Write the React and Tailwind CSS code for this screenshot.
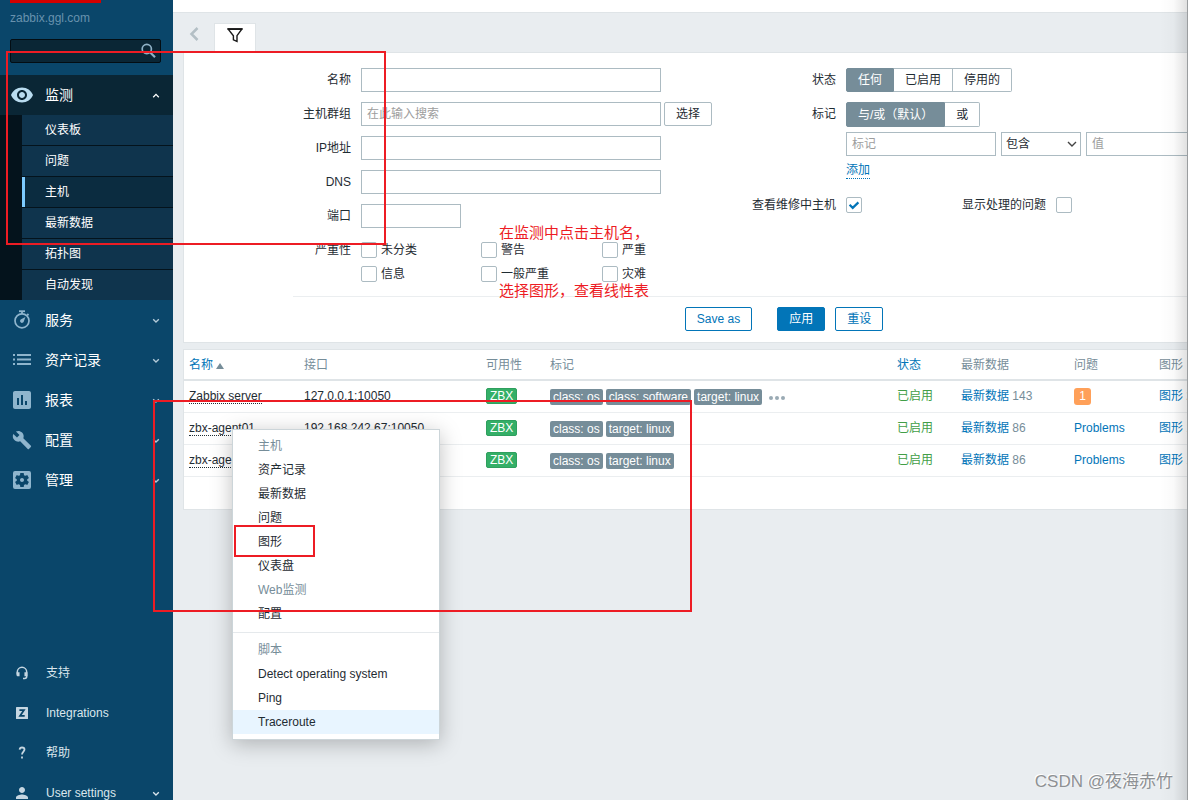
import React from 'react';
import { MdVisibility, MdAssessment, MdSettingsApplications, MdPerson } from 'react-icons/md';

const inputClass =
  'h-6 border border-[#acbbc2] bg-white px-[5px] text-xs text-[#1f2c33] outline-none placeholder:text-[#9d9d9d]';

function Chevron({ up }) {
  return (
    <svg className="h-2 w-2 shrink-0" viewBox="0 0 8 8" fill="none" stroke="currentColor" strokeWidth="1.3">
      <path d={up ? 'M1.2 6.2 4 3.4l2.8 2.8' : 'M1.2 3.2 4 6l2.8-2.8'} />
    </svg>
  );
}

function StopwatchIcon() {
  return (
    <svg className="h-5 w-5" viewBox="0 0 20 20" fill="none" stroke="currentColor">
      <circle cx="10" cy="10.800" r="7" strokeWidth="1.7" />
      <path d="M7 1.200h6" strokeWidth="1.8" />
      <path d="M10 1.500v2.500M15.200 4l1.300 1.300" strokeWidth="1.8" />
      <path d="M13.400 7 11.700 11.800a1.900 1.900 0 1 1-2.600-2.500z" fill="currentColor" stroke="none" />
    </svg>
  );
}

function ListIcon() {
  return (
    <svg className="h-5 w-5" viewBox="0 0 20 20" fill="currentColor">
      <path d="M1 4h2v2H1zM5 4h14v2H5zM1 8.500h2v2H1zM5 8.500h14v2H5zM1 13h2v2H1zM5 13h14v2H5z" />
    </svg>
  );
}

function WrenchIcon() {
  return (
    <svg className="h-5 w-5" viewBox="0 0 24 24" fill="currentColor">
      <path d="M22.7 19l-9.1-9.1c.9-2.3.4-5-1.5-6.9-2-2-5-2.4-7.4-1.3L9 6 6 9 1.6 4.7C.4 7.1.9 10.1 2.9 12.1c1.900 1.900 4.600 2.400 6.900 1.500l9.100 9.100c.4.4 1 .4 1.400 0l2.300-2.300c.5-.4.5-1.100.1-1.400z" />
    </svg>
  );
}

function HeadsetIcon() {
  return (
    <svg className="h-[14px] w-[14px]" viewBox="0 0 14 14" fill="none" stroke="currentColor">
      <path d="M2.300 8.500V6a4.700 4.700 0 0 1 9.400 0V10.500c0 1.200-.8 1.900-2 1.900H8" strokeWidth="1.500" />
      <path d="M1.550 6.300h3v4H3c-.9 0-1.450-.5-1.450-1.300zM12.450 6.300h-3v4h3z" fill="currentColor" stroke="none" />
    </svg>
  );
}

function ZIcon() {
  return (
    <svg className="h-3 w-3" viewBox="0 0 12 12">
      <rect width="12" height="12" rx="0.6" fill="currentColor" />
      <path d="M3.400 3.100h4.600L4 8.900h4.700" fill="none" stroke="#0a466a" strokeWidth="1.700" />
    </svg>
  );
}

function QuestionIcon() {
  return (
    <svg className="h-4 w-4" viewBox="0 0 16 16" fill="none" stroke="currentColor" strokeWidth="1.8">
      <path d="M5.600 4.600C5.800 3 6.700 2.500 8 2.500c1.500 0 2.500.8 2.500 2.100C10.500 6.500 8 6.700 8 9.600" />
      <path d="M8 11.600v2" />
    </svg>
  );
}

const subItems = ['仪表板', '问题', '主机', '最新数据', '拓扑图', '自动发现'];

const mainItems = [
  { label: '服务', icon: <StopwatchIcon /> },
  { label: '资产记录', icon: <ListIcon /> },
  { label: '报表', icon: <MdAssessment size={24} /> },
  { label: '配置', icon: <WrenchIcon /> },
  { label: '管理', icon: <MdSettingsApplications size={24} /> },
];

const footItems = [
  { label: '支持', icon: <HeadsetIcon /> },
  { label: 'Integrations', icon: <ZIcon /> },
  { label: '帮助', icon: <QuestionIcon /> },
  { label: 'User settings', icon: <MdPerson size={18} />, more: true },
];

function Sidebar() {
  return (
    <aside className="flex w-[173px] shrink-0 flex-col overflow-hidden bg-[#0a466a] text-white">
      <div className="px-[10px]">
        <div className="h-[3px] w-[91px] bg-[#d40000]" />
        <div className="mt-[5px] h-5 text-xs leading-5 text-[#6892ae]">zabbix.ggl.com</div>
        <form className="mt-[11px] mr-[2px] flex h-6 items-center rounded-xs border border-[#030d13] bg-[#0a2635]">
          <input aria-label="搜索" className="h-full min-w-0 flex-1 bg-transparent px-1 text-xs outline-none" />
          <button type="button" aria-label="搜索" className="mr-1 text-[#8fb1c6]">
            <svg className="h-4 w-4" viewBox="0 0 16 16" fill="none" stroke="currentColor">
              <circle cx="6.800" cy="6" r="4.600" strokeWidth="1.700" />
              <path d="m10.300 9.500 4.700 4.700" strokeWidth="2.200" />
            </svg>
          </button>
        </form>
      </div>

      <nav className="mt-3">
        <button type="button" className="flex h-10 w-full items-center bg-[#0a2635] pr-[13px] text-left">
          <span className="flex w-11 justify-center text-[#b9dcf0]">
            <MdVisibility size={24} />
          </span>
          <span className="flex-1 pl-px text-sm">监测</span>
          <Chevron up />
        </button>
        <ul className="bg-[#04131c] pl-[22px]">
          {subItems.map((label, i) => (
            <li key={label} className={i < 5 ? 'border-b border-[#04131c]' : ''}>
              <a
                href="#"
                className={
                  'flex h-[30px] items-center text-xs ' +
                  (label === '主机'
                    ? 'border-l-3 border-[#7dcbff] bg-[#0b2c40] pl-5'
                    : 'bg-[#0f344d] pl-[23px]')
                }
              >
                {label}
              </a>
            </li>
          ))}
        </ul>
        {mainItems.map((item) => (
          <button key={item.label} type="button" className="flex h-10 w-full items-center pr-[13px] text-left">
            <span className="flex w-11 justify-center text-[#8fb5cd]">{item.icon}</span>
            <span className="flex-1 pl-px text-sm">{item.label}</span>
            <span className="flex text-[#b5cbd9]">
              <Chevron />
            </span>
          </button>
        ))}
      </nav>

      <nav className="mt-[153px] text-[#dbe6ed]">
        {footItems.map((item) => (
          <a key={item.label} href="#" className="flex h-10 items-center pr-[13px]">
            <span className="flex w-11 justify-center text-[#c5d6e1]">{item.icon}</span>
            <span className="flex-1 pl-[2px] text-xs">{item.label}</span>
            {item.more && <Chevron />}
          </a>
        ))}
      </nav>
    </aside>
  );
}

function TextRow({ id, label, placeholder, narrow, children }) {
  return (
    <div className="flex h-6 items-center">
      <label htmlFor={id} className="mr-[10px] w-[58px] text-right">
        {label}
      </label>
      <input
        id={id}
        placeholder={placeholder}
        className={inputClass + (narrow ? ' w-[100px]' : ' w-[300px]')}
      />
      {children}
    </div>
  );
}

function Checkbox({ id, checked }) {
  return (
    <span className="relative flex h-4 w-4 shrink-0">
      <input
        id={id}
        type="checkbox"
        defaultChecked={checked}
        className="peer h-4 w-4 appearance-none rounded-xs border border-[#acbbc2] bg-white"
      />
      <svg
        className="pointer-events-none absolute inset-0 hidden h-4 w-4 peer-checked:block"
        viewBox="0 0 16 16"
        fill="none"
        stroke="#0275b8"
        strokeWidth="2.200"
      >
        <path d="m3.600 7.800 3.100 3.100 5.700-5.500" />
      </svg>
    </span>
  );
}

const severities = ['未分类', '警告', '严重', '信息', '一般严重', '灾难'];

function Segment({ name, options, tall }) {
  return (
    <div className={'flex w-max ' + (tall ? 'h-[25px]' : 'h-6')} role="radiogroup" aria-label={name}>
      {options.map((option, i) => (
        <label
          key={option}
          className={
            'flex items-center border-y border-r border-[#acbbc2] px-[11px] first:rounded-l-xs first:border-l last:rounded-r-xs ' +
            'has-checked:border-[#768d99] has-checked:bg-[#768d99] has-checked:text-white'
          }
        >
          <input type="radio" name={name} defaultChecked={i === 0} className="sr-only" />
          {option}
        </label>
      ))}
    </div>
  );
}

function Filter() {
  const outline = 'h-6 rounded-xs border border-[#0275b8] px-[11px] text-[#0275b8]';
  return (
    <section className="overflow-hidden border-y border-l border-[#dfe4e7] bg-white pt-[15px] pb-[11px]">
      <form className="ml-[109px] w-[982px]">
        <div className="flex h-[228px]">
          <div className="flex w-[448px] shrink-0 flex-col gap-[10px]">
            <TextRow id="name" label="名称" />
            <TextRow id="groups" label="主机群组" placeholder="在此输入搜索">
              <button type="button" className="ml-[3px] h-6 rounded-xs border border-[#acbbc2] px-[11px]">
                选择
              </button>
            </TextRow>
            <TextRow id="ip" label="IP地址" />
            <TextRow id="dns" label="DNS" />
            <TextRow id="port" label="端口" narrow />
            <div className="flex" role="group" aria-labelledby="severity">
              <span id="severity" className="mr-[10px] w-[58px] text-right leading-6">
                严重性
              </span>
              <ul className="grid grid-cols-[120px_121px_100px]">
                {severities.map((severity, i) => (
                  <li key={severity} className="flex h-6 items-center gap-1">
                    <Checkbox id={'severity-' + i} />
                    <label htmlFor={'severity-' + i}>{severity}</label>
                  </li>
                ))}
              </ul>
            </div>
          </div>

          <div className="grid shrink-0 grid-cols-[95px_auto] content-start gap-x-[10px]">
            <span className="text-right leading-6">状态</span>
            <Segment name="状态" options={['任何', '已启用', '停用的']} />
            <span className="mt-[10px] text-right leading-6">标记</span>
            <div className="mt-[10px]">
              <Segment name="标记" options={['与/或（默认）', '或']} tall />
              <div className="mt-[5px] flex gap-[5px]">
                <input aria-label="标记" placeholder="标记" className={inputClass + ' w-[150px]'} />
                <span className="relative flex">
                  <select
                    aria-label="运算符"
                    className="h-6 w-20 appearance-none border border-[#acbbc2] bg-white px-1 text-xs outline-none"
                  >
                    <option>包含</option>
                  </select>
                  <svg
                    className="pointer-events-none absolute top-2 right-1 h-2 w-[10px]"
                    viewBox="0 0 10 8"
                    fill="none"
                    stroke="#444"
                    strokeWidth="1.400"
                  >
                    <path d="m1 2 4 4 4-4" />
                  </svg>
                </span>
                <input aria-label="值" placeholder="值" className={inputClass + ' w-[150px]'} />
              </div>
              <button
                type="button"
                className="mt-[6px] block border-b border-dotted border-[#0275b8] leading-4 text-[#0275b8]"
              >
                添加
              </button>
            </div>
            <label htmlFor="maintenance" className="mt-[14px] text-right leading-6">
              查看维修中主机
            </label>
            <div className="mt-[14px] flex h-6 items-center">
              <Checkbox id="maintenance" checked />
              <label htmlFor="suppressed" className="mr-[10px] ml-[100px]">
                显示处理的问题
              </label>
              <Checkbox id="suppressed" />
            </div>
          </div>
        </div>

        <div className="flex justify-center border-t border-[#ebeef0] pt-[10px]">
          <button type="button" className={outline + ' mr-[25px]'}>
            Save as
          </button>
          <button type="button" className="mr-[10px] h-6 rounded-xs border border-[#0275b8] bg-[#0275b8] px-[11px] text-white">
            应用
          </button>
          <button type="button" className={outline}>
            重设
          </button>
        </div>
      </form>
    </section>
  );
}

const hosts = [
  {
    name: 'Zabbix server',
    address: '127.0.0.1:10050',
    tags: ['class: os', 'class: software', 'target: linux'],
    more: true,
    data: 143,
    problems: 1,
    graphs: 2,
  },
  {
    name: 'zbx-agent01',
    address: '192.168.242.67:10050',
    tags: ['class: os', 'target: linux'],
    data: 86,
    graphs: 1,
  },
  {
    name: 'zbx-agent02',
    address: '192.168.242.68:10050',
    tags: ['class: os', 'target: linux'],
    data: 86,
    graphs: 1,
  },
];

function HostTable() {
  return (
    <section className="mt-[6px] overflow-hidden border-y border-l border-[#dfe4e7] bg-white pb-8">
      <table className="w-full table-fixed border-collapse text-left whitespace-nowrap [&_td]:px-[5px] [&_th]:px-[5px]">
        <colgroup>
          <col className="w-[115px]" />
          <col className="w-[182px]" />
          <col className="w-16" />
          <col />
          <col className="w-16" />
          <col className="w-[113px]" />
          <col className="w-[85px]" />
          <col className="w-[34px]" />
        </colgroup>
        <thead>
          <tr className="h-[30px] border-b-2 border-[#dfe4e7] text-[#768d99] [&_th]:font-normal">
            <th>
              <a href="#" className="flex items-center gap-[3px] text-[#0275b8]">
                名称
                <svg className="mt-[2px] h-[6px] w-2" viewBox="0 0 8 6" fill="#768d99">
                  <path d="M4 0l4 6H0z" />
                </svg>
              </a>
            </th>
            <th>接口</th>
            <th>可用性</th>
            <th>标记</th>
            <th>
              <a href="#" className="text-[#0275b8]">
                状态
              </a>
            </th>
            <th>最新数据</th>
            <th>问题</th>
            <th>图形</th>
          </tr>
        </thead>
        <tbody>
          {hosts.map((host) => (
            <tr key={host.name} className="h-8 border-b border-[#ebeef0]">
              <td>
                <a href="#" className="inline-block border-b border-dotted border-[#1f2c33] leading-[14px]">
                  {host.name}
                </a>
              </td>
              <td>{host.address}</td>
              <td>
                <span className="flex h-4 w-max items-center rounded-xs border border-[#2f9f5e] bg-[#34af67] px-[3px] text-white">
                  ZBX
                </span>
              </td>
              <td>
                <div className="flex items-center gap-[3px] pt-[2px]">
                  {host.tags.map((tag) => (
                    <span key={tag} className="flex h-4 items-center rounded-xs bg-[#768d99] px-[3px] text-white">
                      {tag}
                    </span>
                  ))}
                  {host.more && (
                    <button type="button" aria-label="更多" className="ml-1">
                      <svg className="h-4 w-4" viewBox="0 0 16 16" fill="#9aaab4">
                        <circle cx="2" cy="9" r="2" />
                        <circle cx="8" cy="9" r="2" />
                        <circle cx="14" cy="9" r="2" />
                      </svg>
                    </button>
                  )}
                </div>
              </td>
              <td>
                <a href="#" className="text-[#429e47]">
                  已启用
                </a>
              </td>
              <td className="text-[#768d99]">
                <a href="#" className="text-[#0275b8]">
                  最新数据
                </a>{' '}
                {host.data}
              </td>
              <td>
                {host.problems ? (
                  <a href="#" className="flex h-[17px] w-[17px] items-center justify-center rounded-[3px] bg-[#ffa059] text-white">
                    {host.problems}
                  </a>
                ) : (
                  <a href="#" className="text-[#0275b8]">
                    Problems
                  </a>
                )}
              </td>
              <td className="text-[#768d99]">
                <a href="#" className="text-[#0275b8]">
                  图形
                </a>{' '}
                {host.graphs}
              </td>
            </tr>
          ))}
        </tbody>
      </table>
    </section>
  );
}

const hostLinks = ['资产记录', '最新数据', '问题', '图形', '仪表盘', 'Web监测', '配置'];
const scripts = ['Detect operating system', 'Ping', 'Traceroute'];

function HostMenu() {
  return (
    <div className="absolute top-[429px] left-[232px] w-52 border border-[#ccd5d9] bg-white pt-1 pb-[5px] leading-6 shadow-[0_4px_20px_rgba(0,0,0,0.25)]">
      <h3 className="px-[25px] text-[#768d99]">主机</h3>
      <ul>
        {hostLinks.map((label) => (
          <li key={label}>
            <a href="#" className={'block px-[25px] ' + (label === 'Web监测' ? 'text-[#768d99]' : '')}>
              {label}
            </a>
          </li>
        ))}
      </ul>
      <h3 className="mt-[6px] border-t border-[#e5e9ec] px-[25px] pt-[5px] text-[#768d99]">脚本</h3>
      <ul>
        {scripts.map((label) => (
          <li key={label}>
            <a href="#" className={'block px-[25px] ' + (label === 'Traceroute' ? 'bg-[#e8f5ff]' : '')}>
              {label}
            </a>
          </li>
        ))}
      </ul>
    </div>
  );
}

function Annotations() {
  const box = 'absolute border-2 border-[#ed1c24]';
  return (
    <div className="pointer-events-none absolute inset-0">
      <div className={box + ' top-[51px] left-[6px] h-[194px] w-[380px]'} />
      <div className={box + ' top-[400px] left-[153px] h-[212px] w-[539px]'} />
      <div className={box + ' top-[525px] left-[234px] h-8 w-[81px]'} />
      <p className="absolute top-[223px] left-[499px] text-[15px] leading-5 whitespace-nowrap text-[#ed1c24]">
        在监测中点击主机名，
      </p>
      <p className="absolute top-[281px] left-[499px] text-[15px] leading-5 whitespace-nowrap text-[#ed1c24]">
        选择图形，查看线性表
      </p>
      <div className="absolute inset-y-0 right-0 w-7 border-r border-[#9a9d9f] bg-linear-to-r from-transparent via-black/2 to-black/12" />
      <p className="absolute right-[15px] bottom-[6px] text-[17px] leading-6 text-[#8e9194] [text-shadow:-1px_-1px_0_#fff]">
        CSDN @夜海赤竹
      </p>
    </div>
  );
}

export default function App() {
  return (
    <div
      lang="zh-CN"
      className="relative flex h-screen overflow-hidden bg-[#e9edf0] font-['Liberation_Sans','Noto_Sans_CJK_SC',sans-serif] text-xs text-[#1f2c33]"
    >
      <Sidebar />
      <main className="min-w-0 flex-1">
        <div className="h-[13px] border-b border-[#dfe4e7] bg-white" />
        <div className="pl-[10px]">
          <div className="flex h-[39px] items-end">
            <button type="button" aria-label="上一页" className="mb-[10px] ml-[6px] text-[#b3bfc5]">
              <svg className="h-4 w-3" viewBox="0 0 12 16" fill="none" stroke="currentColor" strokeWidth="2.500">
                <path d="M8.500 2 2.500 8l6 6" />
              </svg>
            </button>
            <button
              type="button"
              aria-label="过滤器"
              className="ml-[13px] flex h-[29px] w-[42px] justify-center border-x border-t border-[#dfe4e7] bg-white pt-1"
            >
              <svg className="h-4 w-4" viewBox="0 0 16 16" fill="none" stroke="#1a1a1a" strokeWidth="1.400">
                <path d="M1.200 1.200h13.600L10 7.700v5.800l-3.600-1.600V7.700z" />
                <path d="M.6 1h14.800" strokeWidth="1.800" />
              </svg>
            </button>
          </div>
          <Filter />
          <HostTable />
        </div>
      </main>
      <HostMenu />
      <Annotations />
    </div>
  );
}
